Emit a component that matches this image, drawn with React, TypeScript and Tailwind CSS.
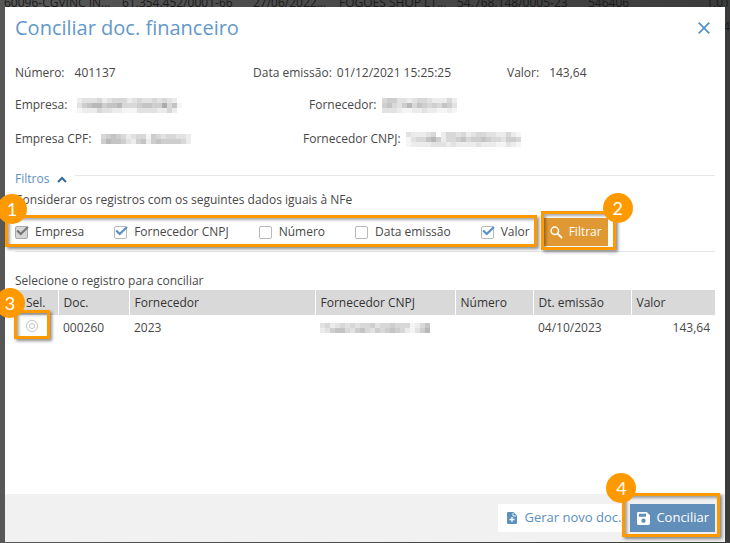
import React from "react";
import { clsx } from "clsx";

const SHADES = ["#ffffff", "#f5f5f5", "#ececec", "#e2e2e2", "#d8d8d8", "#cecece", "#c4c4c4", "#b8b8b8", "#acacac", "#a0a0a0"];

/* Redacted value: a mosaic of 5px cells, one digit of darkness per cell. */
function Redacted({ rows }: { rows: string[] }) {
  const width = rows[0].length * 5;
  const height = rows.length * 5;
  return (
    <svg width={width} height={height} viewBox={`0 0 ${width} ${height}`} shapeRendering="crispEdges" aria-hidden="true" className="block shrink-0">
      {rows.flatMap((row, y) =>
        row.split("").map((c, x) => <rect key={`${x}-${y}`} x={x * 5} y={y * 5} width="5" height="5" fill={SHADES[Number(c)]} />)
      )}
    </svg>
  );
}

function Badge({ n, className }: { n: number; className: string }) {
  return (
    <span className={clsx("absolute z-20 flex size-[30px] items-center justify-center rounded-full bg-[#ff9900] font-[Lato,sans-serif] text-lg leading-none text-white", className)}>
      {n}
    </span>
  );
}

function Highlight({ className }: { className: string }) {
  return (
    <span
      aria-hidden="true"
      className={clsx("pointer-events-none absolute z-10 border-[3px] border-[#ff9900] shadow-[2px_2px_3px_rgba(0,0,0,0.45),inset_2px_2px_3px_rgba(0,0,0,0.35)]", className)}
    />
  );
}

function Check({ label, checked, locked }: { label: string; checked?: boolean; locked?: boolean }) {
  return (
    <label className="flex items-center gap-[7px] whitespace-nowrap">
      <span className="relative block size-[13px]">
        <input
          type="checkbox"
          defaultChecked={checked}
          disabled={locked}
          className={clsx("block size-[13px] appearance-none rounded-[2px] border", locked ? "border-[#a8a8a8] bg-[#d6d6d6]" : "border-[#b9b9b9] bg-white")}
        />
        {checked && (
          <svg viewBox="0 0 14 12" width="14" height="12" className="pointer-events-none absolute top-0 left-0" aria-hidden="true">
            <path d="M2.2 4.5 L5.7 8 L13 1" fill="none" stroke={locked ? "#777777" : "#5b92c4"} strokeWidth="2.3" />
          </svg>
        )}
      </span>
      {label}
    </label>
  );
}

function Field({ label, children, wide }: { label: string; children: React.ReactNode; wide?: boolean }) {
  return (
    <div className={clsx("flex items-center whitespace-nowrap", wide ? "gap-2.5" : "gap-[5px]")}>
      <dt>{label}</dt>
      <dd>{children}</dd>
    </div>
  );
}

function BackgroundRows() {
  return (
    <div className="absolute inset-x-0 -top-[5px] text-xs leading-4 whitespace-nowrap text-[#1c1c1c]" aria-hidden="true">
      <div className="flex h-4">
        <span className="w-[118px] pl-1">60096-CGVINC IN...</span>
        <span className="w-[131px] pl-1">61.354.452/0001-66</span>
        <span className="w-[86px] pl-1">27/06/2022...</span>
        <span className="w-[118px] pl-1">FOGOES SHOP LT...</span>
        <span className="w-[131px] pl-1">54.768.148/0005-23</span>
        <span className="pl-1">546406</span>
        <span className="grow text-right">1.01</span>
      </div>
      <div className="mt-2 text-right">4</div>
    </div>
  );
}

const HEAD = "border-r border-white pl-[5px] text-left font-normal last:border-r-0";

export default function App() {
  return (
    <div className="relative flex h-screen min-h-[420px] flex-col overflow-hidden bg-linear-to-r from-[#575757] to-[#3b3b3b] px-[5px] pt-[7px] pb-px font-['Open_Sans',sans-serif] text-xs text-[#484848]">
      <BackgroundRows />
      <main role="dialog" aria-labelledby="title" className="relative flex grow flex-col bg-white">
        <header className="flex h-[42px] items-center justify-between pr-[14px] pl-[10px]">
          <h1 id="title" className="text-xl text-[#6398c9]">Conciliar doc. financeiro</h1>
          <button type="button" aria-label="Fechar" className="p-px">
            <svg width="12" height="12" viewBox="0 0 12 12" aria-hidden="true">
              <path d="M0.7 0.7 L11.3 11.3 M11.3 0.7 L0.7 11.3" stroke="#5b92c4" strokeWidth="1.8" />
            </svg>
          </button>
        </header>

        <section className="px-[10px] pt-[14px] leading-5">
          <dl>
            <div className="grid grid-cols-[238fr_254fr_208fr]">
              <Field label="Número:" wide>401137</Field>
              <Field label="Data emissão:">01/12/2021 15:25:25</Field>
              <Field label="Valor:" wide>143,64</Field>
            </div>
            <div className="mt-3 grid grid-cols-[294fr_406fr]">
              <Field label="Empresa:" wide>
                <Redacted rows={["233342344423433434320", "356775667444566558461", "122243322111333322420"]} />
              </Field>
              <Field label="Fornecedor:">
                <Redacted rows={["455332344322242", "564357465454653", "333211223221121"]} />
              </Field>
            </div>
            <div className="mt-3.5 grid grid-cols-[288fr_412fr]">
              <Field label="Empresa CPF:" wide>
                <Redacted rows={["456542344154344332", "576653256256555542"]} />
              </Field>
              <Field label="Fornecedor CNPJ:">
                <Redacted rows={["32223402443423443322421", "13446752445645565443554", "12222333232222322211321"]} />
              </Field>
            </div>
          </dl>
        </section>

        <section className="px-[10px] pt-5 leading-5">
          <h2 className="flex items-center gap-2">
            <button type="button" aria-expanded="true" className="flex items-center gap-2 text-[#5b92c4]">
              Filtros
              <svg width="10" height="7" viewBox="0 0 10 7" aria-hidden="true">
                <path d="M1 6 L5 2 L9 6" fill="none" stroke="#336a9c" strokeWidth="2" />
              </svg>
            </button>
            <span className="mb-2 h-px grow bg-[#e6e6e6]" />
          </h2>
          <p className="mt-px">Considerar os registros com os seguintes dados iguais à NFe</p>
          <div className="flex items-center gap-3.5 border-b border-[#e6e6e6] pt-2 pb-[5px]">
            <div className="relative flex h-7 items-center gap-[30px]">
              <Check label="Empresa" checked locked />
              <Check label="Fornecedor CNPJ" checked />
              <Check label="Número" />
              <Check label="Data emissão" />
              <Check label="Valor" checked />
              <Highlight className="-top-[3px] -right-[7px] -bottom-px -left-[10px]" />
              <Badge n={1} className="-top-6 -left-[18px]" />
            </div>
            <div className="relative">
              <button type="button" className="flex h-7 w-16 items-center justify-center gap-1.5 bg-[#e09832] text-white">
                <svg width="13" height="13" viewBox="0 0 13 13" aria-hidden="true">
                  <circle cx="4.8" cy="4.8" r="3.7" fill="none" stroke="white" strokeWidth="1.5" />
                  <path d="M7.6 7.6 L12 12" stroke="white" strokeWidth="1.9" />
                </svg>
                Filtrar
              </button>
              <Highlight className="-top-[7px] -right-2 -bottom-1 -left-[3px]" />
              <Badge n={2} className="-top-[25px] -right-[25px]" />
            </div>
          </div>
        </section>

        <section className="grow px-[10px] pt-5">
          <table className="w-full table-fixed border-collapse">
            <caption className="text-left leading-[18px]">Selecione o registro para conciliar</caption>
            <colgroup>
              <col className="w-[43px]" />
              <col className="w-[71px]" />
              <col />
              <col className="w-[140px]" />
              <col className="w-[78px]" />
              <col className="w-[98px]" />
              <col className="w-[84px]" />
            </colgroup>
            <thead>
              <tr className="h-[25px] bg-[#d9d9d9] text-[#333333]">
                <th scope="col" className="border-r border-white pl-[11px] text-left font-normal">Sel.</th>
                <th scope="col" className={HEAD}>Doc.</th>
                <th scope="col" className={HEAD}>Fornecedor</th>
                <th scope="col" className={HEAD}>Fornecedor CNPJ</th>
                <th scope="col" className={HEAD}>Número</th>
                <th scope="col" className={HEAD}>Dt. emissão</th>
                <th scope="col" className={HEAD}>Valor</th>
              </tr>
            </thead>
            <tbody>
              <tr className="h-[25px]">
                <td className="relative pl-[11px]">
                  <input
                    type="radio"
                    name="registro"
                    aria-label="Selecionar documento 000260"
                    className="mb-1 block size-3 appearance-none rounded-full border border-[#c4c4c4] bg-white p-0.5 before:block before:size-full before:rounded-full before:border before:border-[#c4c4c4]"
                  />
                  <Highlight className="-top-[5px] right-2 bottom-px -left-px" />
                  <Badge n={3} className="-top-[27px] -left-5" />
                </td>
                <td className="pl-[5px]">000260</td>
                <td className="pl-[5px]">2023</td>
                <td className="pl-[5px]">
                  <Redacted rows={["3423434344534454441246", "2356643564354565421357"]} />
                </td>
                <td />
                <td className="pl-[5px]">04/10/2023</td>
                <td className="pr-[5px] text-right">143,64</td>
              </tr>
            </tbody>
          </table>
        </section>

        <footer className="flex h-12 items-center justify-end gap-[7px] bg-[#f1f1f1] pr-[10px] text-[13px]">
          <button type="button" className="flex h-7 items-center gap-2 bg-white pr-0.5 pl-[9px] text-[#5b8fbf]">
            <svg width="10" height="12" viewBox="0 0 10 12" aria-hidden="true">
              <path d="M1.3 0 H6.5 L10 3.5 V10.7 Q10 12 8.7 12 H1.3 Q0 12 0 10.7 V1.3 Q0 0 1.3 0 Z" fill="#5b8fbf" />
              <path d="M6 0.8 V4 H9.2" fill="none" stroke="white" strokeWidth="0.9" />
              <path d="M5 5 V10 M2.5 7.5 H7.5" stroke="white" strokeWidth="1.3" />
            </svg>
            Gerar novo doc.
          </button>
          <div className="relative">
            <button type="button" className="flex h-7 items-center gap-1.5 bg-[#628fba] pr-1.5 pl-[7px] text-white">
              <svg width="13" height="13" viewBox="0 0 12 12" aria-hidden="true">
                <path fillRule="evenodd" d="M1.3 0 H9 L12 3 V10.7 Q12 12 10.7 12 H1.3 Q0 12 0 10.7 V1.3 Q0 0 1.3 0 Z M1.7 1.7 V4.3 H8.3 V1.7 Z M6 6 A2 2 0 1 0 6 10 A2 2 0 1 0 6 6 Z" fill="white" />
              </svg>
              Conciliar
            </button>
            <Highlight className="-top-[11px] -right-[5px] -bottom-[5px] -left-2" />
            <Badge n={4} className="-top-[31px] -left-6" />
          </div>
        </footer>
      </main>
    </div>
  );
}
